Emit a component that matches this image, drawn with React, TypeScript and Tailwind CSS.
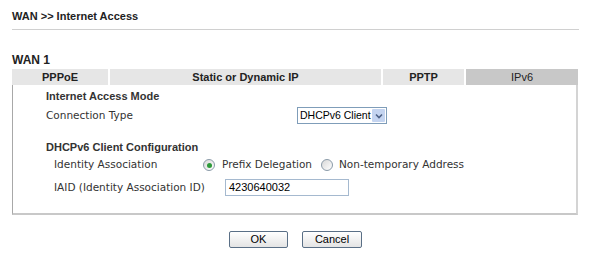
import React from 'react';

const tabs = [
  { label: 'PPPoE', width: 'w-[96px]', active: false },
  { label: 'Static or Dynamic IP', width: 'w-[271px]', active: false },
  { label: 'PPTP', width: 'w-[81px]', active: false },
  { label: 'IPv6', width: 'flex-1', active: true },
];

function Radio({ checked }: { checked?: boolean }) {
  return (
    <span className="inline-flex h-[12px] w-[12px] shrink-0 items-center justify-center rounded-full border border-[#8a9aa8] bg-gradient-to-br from-[#d8d8d8] to-white">
      {checked && <span className="h-[5px] w-[5px] rounded-full bg-[#2e9a3a]" />}
    </span>
  );
}

export default function App() {
  return (
    <div className="h-[255px] w-[591px] bg-white text-[#333] [font-family:'Liberation_Sans',Arial,sans-serif]">
      <div className="px-[12px] pt-[10px]">
        <h1 className="text-[11px] font-bold leading-[13px] text-[#222]">WAN &gt;&gt; Internet Access</h1>
        <div className="mt-[6px] h-px w-[567px] bg-[#d0d0d0]" />

        <div className="mt-[24px] text-[12px] font-bold leading-[13px] text-[#222]">WAN 1</div>

        <div className="mt-[2px] flex h-[16px] w-[566px] gap-[2px]">
          {tabs.map((t) => (
            <div
              key={t.label}
              className={`${t.width} flex items-center justify-center text-[11px] ${
                t.active ? 'bg-[#c8c8c8] font-normal' : 'bg-[#e6e6e6] font-bold'
              } text-[#222]`}
            >
              {t.label}
            </div>
          ))}
        </div>

        <div className="h-[130px] w-[566px] border-l border-l-[#a8a8a8] border-r-2 border-r-[#d4d4d4] border-b-2 border-b-[#c8c8c8] pl-[33px] pt-[4px]">
          <div className="text-[11px] font-bold leading-[14px] text-[#333]">Internet Access Mode</div>
          <div className="mt-[4px] flex h-[17px] items-center [font-family:'DejaVu_Sans',Verdana,sans-serif] text-[10.5px] text-[#333]">
            <span className="w-[251px]">Connection Type</span>
            <div className="flex h-[17px] w-[90px] items-center border border-[#7f9db9] bg-white pl-[2px]">
              <span className="flex-1 whitespace-nowrap [font-family:'Liberation_Sans',Arial,sans-serif] text-[10.5px] text-black">DHCPv6 Client</span>
              <span className="mr-px flex h-[13px] w-[13px] shrink-0 items-center justify-center rounded-[1px] bg-[#c4d4f0]">
                <svg width="8" height="6" viewBox="0 0 8 6">
                  <path d="M1 1.5 L4 4.5 L7 1.5" stroke="#4d6185" strokeWidth="1.6" fill="none" />
                </svg>
              </span>
            </div>
          </div>

          <div className="mt-[16px] text-[11px] font-bold leading-[14px] text-[#333]">DHCPv6 Client Configuration</div>
          <div className="ml-[8px] mt-[3px] flex h-[16px] items-center [font-family:'DejaVu_Sans',Verdana,sans-serif] text-[10.5px] text-[#333]">
            <span className="w-[149px]">Identity Association</span>
            <label className="flex items-center gap-[7px]">
              <Radio checked />
              <span>Prefix Delegation</span>
            </label>
            <label className="ml-[9px] flex items-center gap-[6px]">
              <Radio />
              <span>Non-temporary Address</span>
            </label>
          </div>
          <div className="ml-[8px] mt-[6px] flex h-[17px] items-center [font-family:'DejaVu_Sans',Verdana,sans-serif] text-[10.5px] text-[#333]">
            <span className="w-[171px]">IAID (Identity Association ID)</span>
            <div className="flex h-[17px] w-[124px] items-center border border-[#a5b9cf] bg-white pl-[3px] [font-family:'Liberation_Sans',Arial,sans-serif] text-[11px] text-black">
              4230640032
            </div>
          </div>
        </div>

        <div className="ml-[217px] mt-[16px] flex gap-[14px]">
          <button className="h-[17px] w-[59px] rounded-[2px] border border-[#5a6f86] bg-gradient-to-b from-white to-[#e4e4e4] text-[11px] leading-none text-black">
            OK
          </button>
          <button className="h-[17px] w-[60px] rounded-[2px] border border-[#5a6f86] bg-gradient-to-b from-white to-[#e4e4e4] text-[11px] leading-none text-black">
            Cancel
          </button>
        </div>
      </div>
    </div>
  );
}
